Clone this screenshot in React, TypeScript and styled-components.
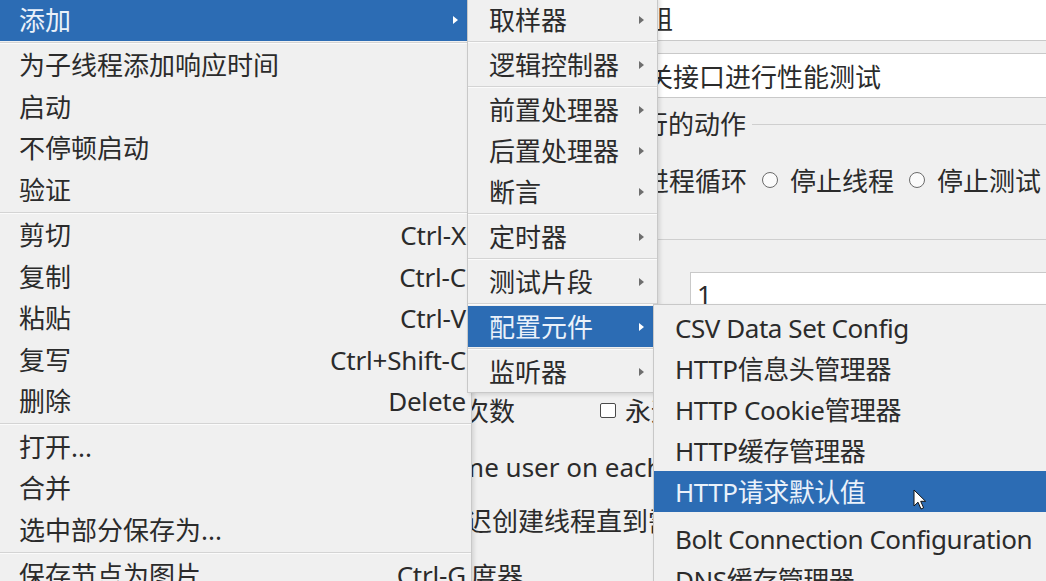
import React from 'react';
import styled, { createGlobalStyle } from 'styled-components';

const FONT = `'Noto Sans', 'Noto Sans CJK SC', sans-serif`;

const GlobalStyle = createGlobalStyle`
  html, body {
    margin: 0;
    padding: 0;
    background: #f0f0f0;
    overflow: hidden;
  }
`;

const Screen = styled.div`
  position: relative;
  width: 1046px;
  height: 581px;
  overflow: hidden;
  background: #f0f0f0;
  font-family: ${FONT};
  font-size: 26px;
  color: #2b2b2b;
`;

/* ---------- thread group form (under the popup) ---------- */

const Form = styled.div`
  display: flex;
  flex-direction: column;
  width: 1120px;
`;

const TextRow = styled.div<{ $top: number }>`
  display: grid;
  grid-template-columns: 585px 1fr;
  align-items: center;
  margin-top: ${({ $top }) => $top}px;
  white-space: nowrap;
`;

const TextField = styled.div<{ $h: number; $pad?: number }>`
  box-sizing: border-box;
  height: ${({ $h }) => $h}px;
  background: #fff;
  border: 1px solid #c9c9c9;
  display: flex;
  align-items: center;
  padding-left: ${({ $pad = 9 }) => $pad}px;
  white-space: nowrap;
`;

const Group = styled.fieldset<{ $top: number; $bottom: number; $left: number }>`
  margin: ${({ $top }) => $top}px 0 0 ${({ $left }) => $left}px;
  padding: 0 0 ${({ $bottom }) => $bottom}px 10px;
  border: 1px solid #cfcfcf;
  border-bottom: none;
  min-width: 0;
`;

const Legend = styled.legend`
  margin-left: -8px;
  padding: 0 6px 0 0;
  height: 30px;
  line-height: 30px;
  white-space: nowrap;
`;

const RadioLine = styled.div`
  display: flex;
  align-items: center;
  gap: 15px;
  height: 30px;
  margin-top: 26px;
  white-space: nowrap;
`;

const Radio = styled.label`
  display: flex;
  align-items: center;
  gap: 12px;
`;

const RadioDot = styled.span`
  width: 14px;
  height: 14px;
  border-radius: 50%;
  border: 1px solid #6b6b6b;
  background: #fbfbfb;
`;

const PropRow = styled.div<{ $top: number }>`
  display: grid;
  grid-template-columns: 185px 94px 1fr;
  align-items: center;
  height: 44px;
  margin-top: ${({ $top }) => $top}px;
  white-space: nowrap;
`;

const PropLabel = styled.span<{ $wide?: boolean }>`
  grid-column: ${({ $wide }) => ($wide ? '1 / 3' : 'auto')};
`;

const CheckLine = styled.span<{ $gap?: number }>`
  display: flex;
  align-items: center;
  gap: ${({ $gap = 18 }) => $gap}px;
`;

const Check = styled.span`
  box-sizing: border-box;
  width: 16px;
  height: 15px;
  border: 1px solid #4a4a4a;
  border-radius: 2px;
  background: #fff;
`;

const Forever = styled(CheckLine)`
  margin-left: 4px;
`;

/* ---------- popup menus ---------- */

const Menu = styled.div<{ $left: number; $top: number; $width: number; $tight?: boolean }>`
  position: absolute;
  left: ${({ $left }) => $left}px;
  top: ${({ $top }) => $top}px;
  width: ${({ $width }) => $width}px;
  box-sizing: border-box;
  padding: 2px 0 0;
  background: #f0f0f0;
  border: 1px solid #c8c8c8;
  box-shadow: 2px 2px 4px rgba(0, 0, 0, 0.12);
  display: flex;
  flex-direction: column;
  letter-spacing: ${({ $tight }) => ($tight ? '-0.45px' : 'normal')};
`;

const Item = styled.div<{ $h: number; $active?: boolean }>`
  height: ${({ $h }) => $h}px;
  flex-shrink: 0;
  display: flex;
  align-items: center;
  padding: 0 5px 0 21px;
  line-height: 1;
  white-space: nowrap;
  background: ${({ $active }) => ($active ? '#2c6cb4' : 'transparent')};
  color: ${({ $active }) => ($active ? '#eaf1fa' : '#2b2b2b')};
`;

const Shortcut = styled.span`
  margin-left: auto;
  letter-spacing: -0.2px;
`;

const Arrow = styled.span<{ $active?: boolean }>`
  margin-left: auto;
  margin-right: 8px;
  width: 0;
  height: 0;
  border-left: 5px solid ${({ $active }) => ($active ? '#ffffff' : '#6e6e6e')};
  border-top: 4px solid transparent;
  border-bottom: 4px solid transparent;
`;

const Separator = styled.div`
  height: 4px;
  flex-shrink: 0;
  display: flex;
  flex-direction: column;
  justify-content: center;
  &::before {
    content: '';
    height: 1px;
    background: #d4d4d4;
  }
  &::after {
    content: '';
    height: 1px;
    background: #fbfbfb;
  }
`;

const Gap = styled.div`
  height: 6px;
  flex-shrink: 0;
`;

const Pointer = styled.svg`
  position: absolute;
  left: 913px;
  top: 489px;
`;

type Entry =
  | { label: string; shortcut?: string; sub?: boolean; active?: boolean }
  | 'sep'
  | 'gap';

const mainMenu: Entry[] = [
  { label: '添加', sub: true, active: true },
  'sep',
  { label: '为子线程添加响应时间' },
  { label: '启动' },
  { label: '不停顿启动' },
  { label: '验证' },
  'sep',
  { label: '剪切', shortcut: 'Ctrl-X' },
  { label: '复制', shortcut: 'Ctrl-C' },
  { label: '粘贴', shortcut: 'Ctrl-V' },
  { label: '复写', shortcut: 'Ctrl+Shift-C' },
  { label: '删除', shortcut: 'Delete' },
  'sep',
  { label: '打开...' },
  { label: '合并' },
  { label: '选中部分保存为...' },
  'sep',
  { label: '保存节点为图片', shortcut: 'Ctrl-G' },
];

const addMenu: Entry[] = [
  { label: '取样器', sub: true },
  'sep',
  { label: '逻辑控制器', sub: true },
  'sep',
  { label: '前置处理器', sub: true },
  { label: '后置处理器', sub: true },
  { label: '断言', sub: true },
  'sep',
  { label: '定时器', sub: true },
  'sep',
  { label: '测试片段', sub: true },
  'sep',
  { label: '配置元件', sub: true, active: true },
  'sep',
  { label: '监听器', sub: true },
];

const configMenu: Entry[] = [
  { label: 'CSV Data Set Config' },
  { label: 'HTTP信息头管理器' },
  { label: 'HTTP Cookie管理器' },
  { label: 'HTTP缓存管理器' },
  { label: 'HTTP请求默认值', active: true },
  'gap',
  { label: 'Bolt Connection Configuration' },
  { label: 'DNS缓存管理器' },
];

const MenuList: React.FC<{ entries: Entry[]; rowHeight: number }> = ({ entries, rowHeight }) => (
  <>
    {entries.map((e, i) => {
      if (e === 'sep') return <Separator key={i} />;
      if (e === 'gap') return <Gap key={i} />;
      return (
        <Item key={i} $h={rowHeight} $active={e.active}>
          <span>{e.label}</span>
          {e.shortcut && <Shortcut>{e.shortcut}</Shortcut>}
          {e.sub && <Arrow $active={e.active} />}
        </Item>
      );
    })}
  </>
);

const errorActions = ['继续', '启动下一进程循环', '停止线程', '停止测试', '立即停止测试'];

export default function App() {
  return (
    <Screen>
      <GlobalStyle />
      <Form>
        <TextRow $top={-5}>
          <span>名称：</span>
          <TextField $h={46}>线程组</TextField>
        </TextRow>
        <TextRow $top={12}>
          <span>注释：</span>
          <TextField $h={45}>对相关接口进行性能测试</TextField>
        </TextRow>

        <Group $top={11} $bottom={14} $left={405}>
          <Legend>在取样器错误后要执行的动作</Legend>
          <RadioLine>
            {errorActions.map((a) => (
              <Radio key={a}>
                <RadioDot />
                {a}
              </Radio>
            ))}
          </RadioLine>
        </Group>

        <Group $top={15} $bottom={0} $left={400}>
          <Legend>线程属性</Legend>
          <PropRow $top={18}>
            <PropLabel $wide>线程数：</PropLabel>
            <TextField $h={44} $pad={6}>1</TextField>
          </PropRow>
          <PropRow $top={14}>
            <PropLabel $wide>Ramp-Up时间（秒）：</PropLabel>
            <TextField $h={44} $pad={6}>1</TextField>
          </PropRow>
          <PropRow $top={14}>
            <PropLabel>循环次数</PropLabel>
            <Forever $gap={9}>
              <Check />
              永远
            </Forever>
            <TextField $h={44} $pad={6}>1</TextField>
          </PropRow>
          <PropRow $top={13}>
            <CheckLine>
              <Check />
              Same user on each iteration
            </CheckLine>
          </PropRow>
          <PropRow $top={9}>
            <CheckLine $gap={27}>
              <Check />
              延迟创建线程直到需要
            </CheckLine>
          </PropRow>
          <PropRow $top={11}>
            <CheckLine>
              <Check />
              调度器
            </CheckLine>
          </PropRow>
        </Group>
      </Form>

      <Menu $left={-3} $top={-4} $width={475}>
        <MenuList entries={mainMenu} rowHeight={41.5} />
      </Menu>
      <Menu $left={467} $top={-4} $width={191}>
        <MenuList entries={addMenu} rowHeight={41} />
      </Menu>
      <Menu $left={653} $top={304} $width={430} $tight>
        <MenuList entries={configMenu} rowHeight={41} />
      </Menu>

      <Pointer width="14" height="22" viewBox="0 0 14 22">
        <path
          d="M1 1 L1 17 L5 13.2 L8 20 L10.6 18.8 L7.7 12.3 L12.6 12.3 Z"
          fill="#ffffff"
          stroke="#111111"
          strokeWidth="1"
          strokeLinejoin="round"
        />
      </Pointer>
    </Screen>
  );
}
